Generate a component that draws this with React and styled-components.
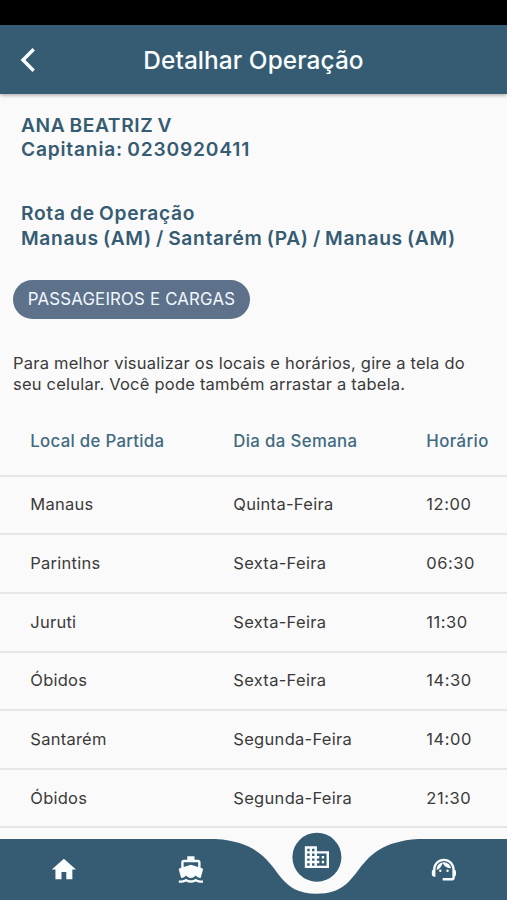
import React from "react";
import styled, { createGlobalStyle } from "styled-components";
import { MdHome, MdDirectionsBoat, MdDomain, MdSupportAgent } from "react-icons/md";

const GlobalStyle = createGlobalStyle`
  * { box-sizing: border-box; }
  body { margin: 0; background: #fafafa; }
`;

const Screen = styled.div`
  width: 507px;
  height: 900px;
  overflow: hidden;
  position: relative;
  display: flex;
  flex-direction: column;
  background: #fafafa;
  color: #3a3a3a;
  font-family: Inter, "Liberation Sans", sans-serif;
`;

const StatusBar = styled.div`
  flex: none;
  height: 25px;
  background: #000;
`;

const Header = styled.header`
  flex: none;
  height: 69px;
  display: grid;
  grid-template-columns: 56px 1fr 56px;
  align-items: center;
  background: #355c72;
  color: #fafdff;
  box-shadow: 0 1px 4px rgba(0, 0, 0, 0.38);
`;

const BackButton = styled.button`
  display: flex;
  padding: 0 0 0 16px;
  border: 0;
  background: none;
  color: inherit;
`;

const Title = styled.h1`
  margin: 0;
  font-size: 24.4px;
  font-weight: 500;
  line-height: 30px;
  letter-spacing: ${(p) => p.$spacing}px;
  text-align: center;
  white-space: nowrap;
`;

const Details = styled.section`
  flex: none;
  padding: 19px 21px 0;
`;

const DetailGroup = styled.div`
  margin-bottom: 39.5px;
`;

const DetailLine = styled.p`
  margin: 0;
  color: #355c72;
  font-size: 19.2px;
  font-weight: 600;
  line-height: 24.4px;
  letter-spacing: ${(p) => p.$spacing}px;
  word-spacing: -1.2px;
  white-space: nowrap;
`;

const Chip = styled.div`
  flex: none;
  align-self: flex-start;
  width: 237px;
  height: 39px;
  margin: -10px 0 0 13px;
  border-radius: 20px;
  background: #5d718a;
  color: #f0f8ff;
  font-size: 16.8px;
  line-height: 38px;
  letter-spacing: ${(p) => p.$spacing}px;
  text-align: center;
  white-space: nowrap;
`;

const Hint = styled.p`
  flex: none;
  margin: 34px 13px 0;
  font-size: 16.5px;
  line-height: 21px;
  letter-spacing: ${(p) => p.$spacing}px;
  white-space: nowrap;
`;

const Table = styled.div`
  flex: none;
  margin-top: 11px;
`;

const Row = styled.div`
  display: grid;
  grid-template-columns: 203px 193px 1fr;
  align-items: center;
  height: ${(p) => (p.$head ? 71 : 58.65)}px;
  padding-top: ${(p) => (p.$head ? 1 : 0)}px;
  padding-left: 30.3px;
  padding-bottom: ${(p) => (p.$head ? 0 : 1)}px;
  border-bottom: 2px solid #e6e6e6;
  color: ${(p) => (p.$head ? "#416a80" : "#3a3a3a")};
  font-size: ${(p) => (p.$head ? 16.8 : 16.5)}px;
  font-weight: ${(p) => (p.$head ? 500 : 400)};
  white-space: nowrap;
`;

const Cell = styled.span`
  letter-spacing: ${(p) => p.$spacing}px;
`;

const NavBar = styled.nav`
  position: absolute;
  left: 0;
  bottom: 0;
  width: 100%;
  height: 61px;
`;

const NavShape = styled.svg`
  position: absolute;
  inset: 0;
  display: block;
`;

const NavItems = styled.div`
  position: relative;
  height: 61px;
  display: grid;
  grid-template-columns: repeat(4, 1fr);
  justify-items: center;
  align-items: center;
`;

const NavItem = styled.button`
  display: flex;
  align-items: center;
  justify-content: center;
  width: 49px;
  height: 49px;
  padding: 0;
  border: 0;
  border-radius: 50%;
  background: ${(p) => (p.$active ? "#355c72" : "none")};
  color: #fafdff;
  transform: ${(p) => (p.$active ? "translate(0.4px, -12.3px)" : "translateX(0.4px)")};
`;

const rows = [
  ["Manaus", "Quinta-Feira", "12:00"],
  ["Parintins", "Sexta-Feira", "06:30"],
  ["Juruti", "Sexta-Feira", "11:30"],
  ["Óbidos", "Sexta-Feira", "14:30"],
  ["Santarém", "Segunda-Feira", "14:00"],
  ["Óbidos", "Segunda-Feira", "21:30"],
];

const columnSpacing = [0.25, 0.3, 0.55];

const navItems = [
  { label: "Início", Icon: MdHome },
  { label: "Embarcações", Icon: MdDirectionsBoat },
  { label: "Empresas", Icon: MdDomain, active: true },
  { label: "Suporte", Icon: MdSupportAgent },
];

export default function App() {
  return (
    <>
      <GlobalStyle />
      <Screen>
        <StatusBar />
        <Header>
          <BackButton aria-label="Voltar">
            <svg width="24" height="28" viewBox="0 0 24 28" fill="none">
              <path d="M17.7 3.3 7 14l10.7 10.7" stroke="currentColor" strokeWidth="3.4" />
            </svg>
          </BackButton>
          <Title $spacing={0.08}>Detalhar Operação</Title>
        </Header>
        <Details>
          <DetailGroup>
            <DetailLine $spacing={0.6}>ANA BEATRIZ V</DetailLine>
            <DetailLine $spacing={0.8}>Capitania: 0230920411</DetailLine>
          </DetailGroup>
          <DetailGroup>
            <DetailLine $spacing={0.7}>Rota de Operação</DetailLine>
            <DetailLine $spacing={0.65}>Manaus (AM) / Santarém (PA) / Manaus (AM)</DetailLine>
          </DetailGroup>
        </Details>
        <Chip $spacing={0.2}>PASSAGEIROS E CARGAS</Chip>
        <Hint $spacing={0.22}>
          Para melhor visualizar os locais e horários, gire a tela do
          <br />
          seu celular. Você pode também arrastar a tabela.
        </Hint>
        <Table>
          <Row $head>
            <Cell $spacing={0.3}>Local de Partida</Cell>
            <Cell $spacing={0.36}>Dia da Semana</Cell>
            <Cell $spacing={0.4}>Horário</Cell>
          </Row>
          {rows.map((row, i) => (
            <Row key={i}>
              {row.map((text, j) => (
                <Cell key={j} $spacing={columnSpacing[j]}>{text}</Cell>
              ))}
            </Row>
          ))}
        </Table>
        <NavBar>
          <NavShape width="507" height="61" viewBox="0 0 507 61">
            <path d="M0 0H507V61H0Z" fill="#fafafa" />
            <path
              d="M0 0H215.5C286.5 4.6 266.2 54.7 316.9 54.7C367.6 54.7 347.3 4.6 418.3 0H507V61H0Z"
              fill="#355c72"
            />
          </NavShape>
          <NavItems>
            {navItems.map(({ label, Icon, active }) => (
              <NavItem key={label} aria-label={label} $active={active}>
                <Icon size={29} />
              </NavItem>
            ))}
          </NavItems>
        </NavBar>
      </Screen>
    </>
  );
}
